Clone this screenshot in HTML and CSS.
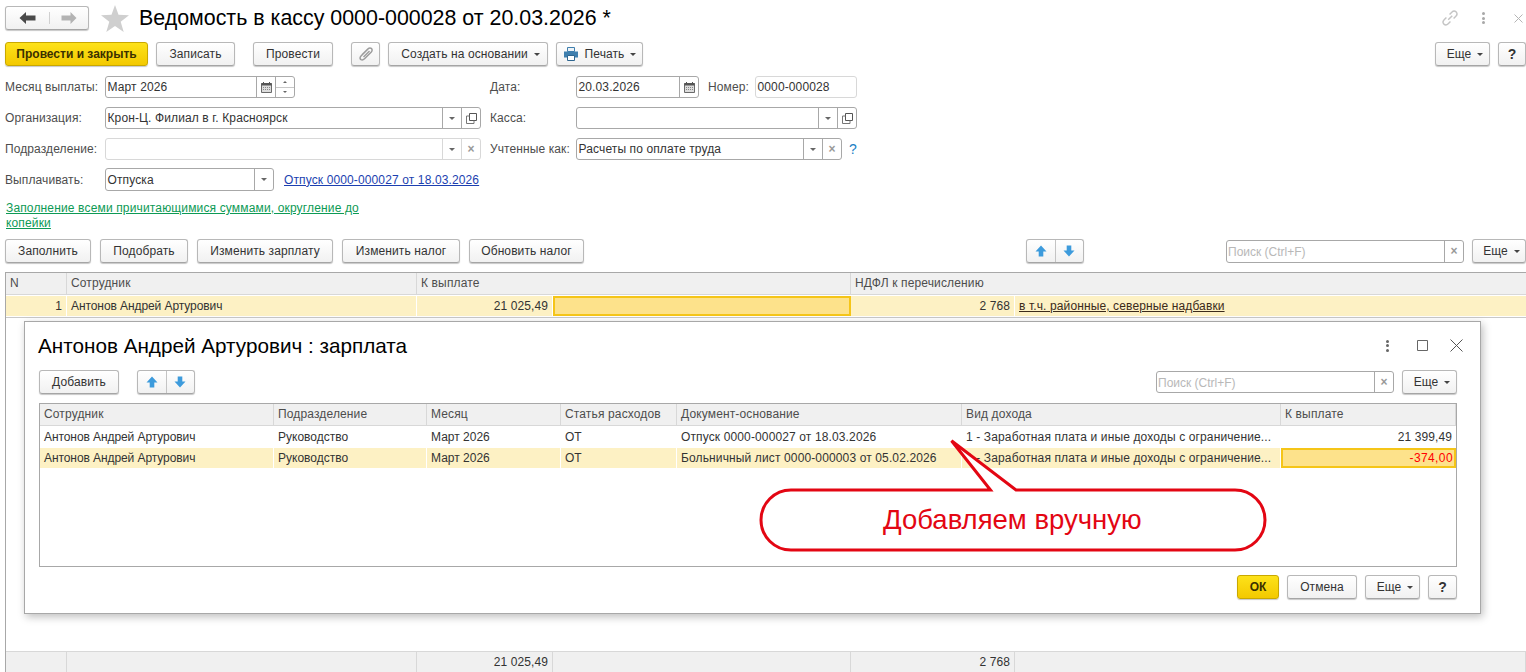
FILE: index.html
```html
<!DOCTYPE html>
<html lang="ru">
<head>
<meta charset="utf-8">
<title>Ведомость в кассу</title>
<link rel="stylesheet" href="styles.css">
</head>
<body>
<svg class="defs" width="0" height="0" aria-hidden="true">
  <symbol id="i-up" viewBox="0 0 12 12"><path d="M6 .5 11.500 6.500H8.300V11.500H3.700V6.500H.5Z" fill="#3d9bdc"/></symbol>
  <symbol id="i-down" viewBox="0 0 12 12"><path d="M6 11.500 11.500 5.500H8.300V.5H3.700V5.500H.5Z" fill="#3d9bdc"/></symbol>
  <symbol id="i-cal" viewBox="0 0 11 11"><path d="M.5 1.500H10.500V10.500H.5Z" fill="#dcdcdc" stroke="#6a6a6a"/><path d="M.5 1H10.500V3.500H.5Z" fill="#555"/><path d="M2.500 0V2M8.500 0V2" stroke="#555"/><path d="M2 5.500H9M2 7.500H9" stroke="#888" stroke-dasharray="1 1"/></symbol>
  <symbol id="i-open" viewBox="0 0 11 11"><path d="M3.500 .5H10.500V7.500H3.500Z" fill="none" stroke="#555"/><path d="M3.500 3H.5V10.500H8V7.500" fill="none" stroke="#777"/></symbol>
</svg>
<div class="page">
  <header class="head">
    <div class="btn nav">
      <span class="nav-cell back"><svg width="17" height="12" viewBox="0 0 17 12"><path d="M7 0 .5 6 7 12V8.500H16.500V3.500H7Z" fill="#4a4a4a"/></svg></span>
      <span class="nav-cell"><svg width="16" height="12" viewBox="0 0 16 12"><path d="M9.500 0 15.500 6 9.500 12V8.500H.5V3.500H9.500Z" fill="#b3b3b3"/></svg></span>
    </div>
    <svg class="star" width="28" height="27" viewBox="0 0 28 27"><path d="M14 0 17.500 9.800 28 10.200 19.700 16.700 22.700 27 14 21 5.300 27 8.300 16.700 0 10.200 10.500 9.800Z" fill="#cfcfcf"/></svg>
    <h1 class="title">Ведомость в кассу 0000-000028 от 20.03.2026 *</h1>
    <div class="win-icons">
      <svg class="chain" width="18" height="18" viewBox="0 0 20 20" fill="none" stroke="#c4c4c4" stroke-width="1.600"><path d="M8 12 12.500 7.500"/><path d="M9.500 6 12 3.500C13.500 2 15.500 2 16.800 3.200 18 4.500 18 6.500 16.500 8L14 10.500"/><path d="M10.500 14 8 16.500C6.500 18 4.500 18 3.200 16.800 2 15.500 2 13.500 3.500 12L6 9.500"/></svg>
      <span class="kebab light"><i></i><i></i><i></i></span>
      <svg class="win-x" width="9" height="9" viewBox="0 0 9 9" stroke="#b5b5b5"><path d="M.5 .5 8.500 8.500M8.500 .5 .5 8.500"/></svg>
    </div>
  </header>

  <div class="bar main-bar">
    <button class="btn primary w143">Провести и закрыть</button>
    <button class="btn w79">Записать</button>
    <button class="btn w80 ml10">Провести</button>
    <button class="btn w29 ml10"><svg width="14" height="14" viewBox="0 0 14 14" fill="none" stroke="#9c9c9c" stroke-width="1.500"><path d="M9.500 1.500 2 9C.5 10.500 1 12 2 12.700 3 13.300 4.300 13 5.500 11.800L12.300 5C13.500 3.700 13.300 2.200 12.300 1.400 11.300.7 10 .9 8.800 2L3 7.800"/><path d="M10.500 4 4.500 10"/></svg></button>
    <button class="btn w160 more">Создать на основании <i class="caret"></i></button>
    <button class="btn w87"><svg class="printer" width="16" height="14" viewBox="0 0 16 14"><path d="M4.500 .5H11.500V4.500H4.500Z" fill="#eef3f7" stroke="#3f7fae"/><path d="M1 4.500H15V10.500H1Z" fill="#3f7fae"/><path d="M4.500 8.500H11.500V13.500H4.500Z" fill="#fff" stroke="#2f6690"/></svg>Печать <i class="caret"></i></button>
    <span class="grow"></span>
    <button class="btn w55 more">Еще <i class="caret"></i></button>
    <button class="btn w28 q">?</button>
  </div>

  <div class="form">
    <div class="row">
      <label class="lbl l1">Месяц выплаты:</label>
      <div class="field w190"><span class="val">Март 2026</span><span class="cell"><svg width="11" height="11"><use href="#i-cal"/></svg></span><span class="cell spin"><span><i class="tri up"></i></span><span><i class="tri"></i></span></span></div>
      <label class="lbl l2 gap195">Дата:</label>
      <div class="field w123"><span class="val">20.03.2026</span><span class="cell"><svg width="11" height="11"><use href="#i-cal"/></svg></span></div>
      <label class="lbl l3">Номер:</label>
      <div class="field soft w102"><span class="val">0000-000028</span></div>
    </div>
    <div class="row">
      <label class="lbl l1">Организация:</label>
      <div class="field w376"><span class="val">Крон-Ц. Филиал в г. Красноярск</span><span class="cell"><i class="tri"></i></span><span class="cell"><svg width="11" height="11"><use href="#i-open"/></svg></span></div>
      <label class="lbl l2 gap9">Касса:</label>
      <div class="field w281"><span class="val"></span><span class="cell"><i class="tri"></i></span><span class="cell"><svg width="11" height="11"><use href="#i-open"/></svg></span></div>
    </div>
    <div class="row">
      <label class="lbl l1">Подразделение:</label>
      <div class="field soft w376"><span class="val"></span><span class="cell"><i class="tri"></i></span><span class="cell"><span class="x">×</span></span></div>
      <label class="lbl l2 gap9">Учтенные как:</label>
      <div class="field w266"><span class="val">Расчеты по оплате труда</span><span class="cell"><i class="tri"></i></span><span class="cell"><span class="x">×</span></span></div>
      <span class="hint">?</span>
    </div>
    <div class="row tall">
      <label class="lbl l1">Выплачивать:</label>
      <div class="field w169"><span class="val">Отпуска</span><span class="cell"><i class="tri"></i></span></div>
      <a class="link blue">Отпуск 0000-000027 от 18.03.2026</a>
    </div>
  </div>

  <a class="link green note">Заполнение всеми причитающимися суммами, округление до копейки</a>

  <div class="bar table-bar">
    <button class="btn w86">Заполнить</button>
    <button class="btn w88">Подобрать</button>
    <button class="btn w136">Изменить зарплату</button>
    <button class="btn w118">Изменить налог</button>
    <button class="btn w115">Обновить налог</button>
    <span class="grow"></span>
    <div class="btn arrows"><span><svg width="12" height="12"><use href="#i-up"/></svg></span><span><svg width="12" height="12"><use href="#i-down"/></svg></span></div>
    <span class="spacer"></span>
    <div class="field search"><span class="val ph">Поиск (Ctrl+F)</span><span class="cell"><span class="x">×</span></span></div>
    <button class="btn w54 more">Еще <i class="caret"></i></button>
  </div>

  <section class="grid outer">
    <div class="gr head-row">
      <div class="c">N</div><div class="c">Сотрудник</div><div class="c span2">К выплате</div><div class="c span2 last">НДФЛ к перечислению</div>
    </div>
    <div class="gr sel">
      <div class="c r">1</div><div class="c name">Антонов Андрей Артурович</div><div class="c r">21 025,49</div><div class="c cur"></div><div class="c r">2 768</div><div class="c last"><a class="link dark">в т.ч. районные, северные надбавки</a></div>
    </div>
    <div class="grow"></div>
    <div class="gr foot">
      <div class="c"></div><div class="c"></div><div class="c r">21 025,49</div><div class="c"></div><div class="c r">2 768</div><div class="c last"></div>
    </div>
  </section>

  <section class="dialog">
    <div class="dlg-head">
      <h2 class="dlg-title">Антонов Андрей Артурович : зарплата</h2>
      <span class="kebab"><i></i><i></i><i></i></span>
      <svg class="dlg-max" width="11" height="11" viewBox="0 0 11 11"><path d="M.5 .5H10.500V10.500H.5Z" fill="none" stroke="#666"/></svg>
      <svg class="dlg-close" width="13" height="13" viewBox="0 0 13 13" stroke="#555"><path d="M.5 .5 12.500 12.500M12.500 .5 .5 12.500"/></svg>
    </div>
    <div class="bar dlg-bar">
      <button class="btn w80">Добавить</button>
      <div class="btn arrows ml10"><span><svg width="12" height="12"><use href="#i-up"/></svg></span><span><svg width="12" height="12"><use href="#i-down"/></svg></span></div>
      <span class="grow"></span>
      <div class="field search"><span class="val ph">Поиск (Ctrl+F)</span><span class="cell"><span class="x">×</span></span></div>
      <button class="btn w55 more">Еще <i class="caret"></i></button>
    </div>
    <div class="grid inner">
      <div class="gr2 head-row">
        <div class="c">Сотрудник</div><div class="c">Подразделение</div><div class="c">Месяц</div><div class="c">Статья расходов</div><div class="c">Документ-основание</div><div class="c">Вид дохода</div><div class="c">К выплате</div>
      </div>
      <div class="gr2 plain">
        <div class="c name">Антонов Андрей Артурович</div><div class="c">Руководство</div><div class="c">Март 2026</div><div class="c">ОТ</div><div class="c wide">Отпуск 0000-000027 от 18.03.2026</div><div class="c wide">1 - Заработная плата и иные доходы с ограничение...</div><div class="c r">21 399,49</div>
      </div>
      <div class="gr2 sel">
        <div class="c name">Антонов Андрей Артурович</div><div class="c">Руководство</div><div class="c">Март 2026</div><div class="c">ОТ</div><div class="c wide">Больничный лист 0000-000003 от 05.02.2026</div><div class="c wide">1 - Заработная плата и иные доходы с ограничение...</div><div class="c r cur neg">-374,00</div>
      </div>
    </div>
    <div class="bar dlg-foot">
      <span class="grow"></span>
      <button class="btn primary w42">ОК</button>
      <button class="btn w70">Отмена</button>
      <button class="btn w55 more">Еще <i class="caret"></i></button>
      <button class="btn w29 q">?</button>
    </div>
  </section>

  <div class="callout">
    <svg class="bubble" width="520" height="118" viewBox="0 0 520 118"><path d="M32 53H231.500L192.500 3.700 257 53H476A30 30 0 0 1 476 113H32A30 30 0 0 1 32 53Z" fill="#fff" stroke="#e30613" stroke-width="3"/></svg>
    <span class="callout-text">Добавляем вручную</span>
  </div>
</div>
</body>
</html>
```
FILE: styles.css
```css
* { box-sizing: border-box; }
html, body { margin: 0; height: 100%; }
body { background: #fff; overflow: hidden; font: 12px "Liberation Sans", Arial, sans-serif; color: #333; }
.defs { position: absolute; }
.page { position: relative; width: 1526px; height: 672px; display: flex; flex-direction: column; overflow: hidden; }
.grow { flex: 1; }

.head { display: flex; align-items: center; height: 28px; margin-top: 4px; padding-left: 5px; }
.nav { display: flex; width: 84px; height: 28px; padding: 0; border-radius: 4px; box-shadow: none; letter-spacing: 0; }
.nav-cell { flex: 1; display: flex; align-items: center; justify-content: center; }
.nav-cell.back { flex: none; width: 43px; }
.nav-cell + .nav-cell { border-left: 1px solid #d0d0d0; }
.star { margin: 0 10px 0 12px; flex: none; }
.title { margin: 0; font-size: 21.400px; font-weight: 400; color: #000; white-space: nowrap; }
.win-icons { margin-left: auto; display: flex; align-items: center; padding-right: 3px; }
.kebab { display: inline-flex; flex-direction: column; gap: 1.500px; }
.kebab i { width: 3px; height: 3px; border-radius: 50%; background: #666; }
.kebab.light i { background: #a8a8a8; }
.kebab.light { margin: 0 29px 0 23px; }

.bar { display: flex; align-items: center; gap: 8px; }
.main-bar { margin-top: 10px; height: 24px; padding-left: 5px; }
.btn { display: inline-flex; align-items: center; justify-content: center; height: 24px; padding: 0; border: 1px solid #b8b8b8; border-bottom-color: #a5a5a5; border-radius: 3px; background: linear-gradient(#fff, #f1f1f1); box-shadow: 0 1px 1px #c8c8c8; font: inherit; letter-spacing: .1px; color: #333; white-space: nowrap; flex: none; }
.more { padding-left: 5px; }
.primary { background: linear-gradient(#fde21a, #f3c900); border-color: #c9a800; color: #3a3000; font-weight: 700; letter-spacing: 0; }
.q { font-weight: 700; font-size: 14px; }
.caret { display: inline-block; margin-left: 6px; border: 3px solid transparent; border-top: 3px solid #444; border-bottom: 0; vertical-align: middle; }
.printer { margin-right: 6px; }
.ml10 { margin-left: 10px; }
.w28 { width: 28px; } .w29 { width: 29px; } .w42 { width: 42px; } .w54 { width: 54px; } .w55 { width: 55px; } .w70 { width: 70px; } .w79 { width: 79px; } .w80 { width: 80px; } .w86 { width: 86px; } .w87 { width: 87px; } .w88 { width: 88px; } .w115 { width: 115px; } .w118 { width: 118px; } .w136 { width: 136px; } .w143 { width: 143px; } .w160 { width: 160px; }

.form { display: flex; flex-direction: column; gap: 9px; margin-top: 10px; padding-left: 5px; }
.row { display: flex; align-items: center; height: 22px; }
.row.tall { height: 23px; margin-top: -1px; }
.row.tall .field { height: 23px; }
.row.tall .val { line-height: 22px; }
.lbl { color: #4d4d4d; flex: none; white-space: nowrap; letter-spacing: .1px; }
.l1 { width: 100px; }
.l2 { width: 86px; }
.l3 { width: 47px; margin-left: 9px; }
.gap195 { margin-left: 195px; }
.gap9 { margin-left: 9px; }
.field { display: flex; align-items: stretch; height: 22px; border: 1px solid #a8a8a8; border-radius: 3px; background: #fff; flex: none; }
.field.soft { border-color: #d8d8d8; }
.val { flex: 1; padding-left: 1.500px; line-height: 20px; letter-spacing: .12px; color: #333; white-space: nowrap; overflow: hidden; }
.ph { color: #b8b8b8; padding-left: 1px; letter-spacing: 0; line-height: 22px; }
.cell { width: 19px; border-left: 1px solid #a8a8a8; display: flex; align-items: center; justify-content: center; flex: none; }
.field.soft .cell { border-left-color: #d8d8d8; }
.spin { flex-direction: column; align-items: stretch; }
.spin span { flex: 1; display: flex; align-items: center; justify-content: center; }
.spin span + span { border-top: 1px solid #c8c8c8; }
.tri { display: block; width: 0; height: 0; border: 3px solid transparent; border-top: 3px solid #666; border-bottom: 0; }
.tri.up { border-top: 0; border-bottom: 3px solid #666; }
.spin .tri { border-width: 2px; border-top-width: 2px; border-bottom-width: 0; }
.spin .tri.up { border-top-width: 0; border-bottom-width: 2px; }
.x { color: #999; font-weight: 700; font-size: 12px; line-height: 1; }
.w102 { width: 102px; } .w123 { width: 123px; } .w169 { width: 169px; } .w190 { width: 190px; } .w266 { width: 266px; } .w281 { width: 281px; } .w376 { width: 376px; }
.hint { margin-left: 7px; color: #1c7fc4; font-size: 14px; }

.link { text-decoration: underline; }
.blue { color: #1c3fb0; margin-left: 10px; letter-spacing: .125px; }
.green { color: #0d9a55; letter-spacing: .15px; }
.dark { color: #3b2a1a; letter-spacing: .12px; }
.note { display: block; width: 360px; margin: 10px 0 0 6px; line-height: 15px; }

.table-bar { margin-top: 8px; height: 24px; padding-left: 5px; gap: 9px; }
.arrows { display: flex; width: 58px; }
.arrows span { flex: 1; display: flex; align-items: center; justify-content: center; height: 100%; }
.arrows span + span { border-left: 1px solid #c4c4c4; }
.spacer { width: 124px; flex: none; }
.search { width: 238px; }
.table-bar .search { margin-right: -1px; height: 23px; }

.grid { display: flex; flex-direction: column; border: 1px solid #a8a8a8; }
.outer { margin: 9px 0 0 5px; flex: 1; border-right: 0; border-bottom: 0; min-height: 0; }
.gr { display: grid; grid-template-columns: 61px 350px 136px 298px 164px 1fr; }
.gr2 { display: grid; grid-template-columns: 234px 153px 134px 116px 285px 319px 1fr; }
.c { padding: 0 4px; line-height: 20px; white-space: nowrap; overflow: hidden; border-right: 1px solid #fff; color: #333; }
.name { letter-spacing: -.08px; }
.wide { letter-spacing: .13px; }
.head-row { background: #f0f0f0; height: 22px; border-bottom: 1px solid #d8d8d8; margin-bottom: 1px; }
.head-row .c { line-height: 21px; color: #4d4d4d; border-right: 1px solid #d8d8d8; letter-spacing: .14px; }
.head-row .last { border-right: 0; }
.span2 { grid-column: span 2; }
.sel { background: #fdf1c4; height: 20px; margin-bottom: 1px; }
.plain { height: 20px; margin-bottom: 1px; }
.plain .r { padding-right: 3px; }
.r { text-align: right; letter-spacing: .1px; }
.cur { background: #fde28b; border: 2px solid #f5c518; line-height: 16px; }
.neg { color: #f00; padding-right: 1px; letter-spacing: .4px; }
.foot { height: 21px; background: #f0f0f0; border-top: 1px solid #d8d8d8; }
.foot .c { border-right: 1px solid #d8d8d8; }
.last { border-right: 0; }
.outer .sel { border-bottom: 1px solid #fff; height: 21px; box-shadow: 0 1px 0 #c8c8c8; }
.outer .sel .c { line-height: 21px; }

.dialog { position: absolute; left: 24px; top: 321px; width: 1457px; height: 293px; background: #fff; border: 1px solid #a8a8a8; box-shadow: 2px 3px 8px rgba(0,0,0,.25); padding: 0 23px 0 14px; display: flex; flex-direction: column; }
.dlg-head { display: flex; align-items: center; height: 47px; }
.dlg-title { margin: 0 auto 0 -1px; font-size: 20.700px; font-weight: 400; color: #000; }
.dlg-max { margin-left: 28px; }
.dlg-close { margin-left: 22px; margin-right: -6px; }
.dlg-bar { height: 24px; margin-top: 1px; gap: 8px; }
.inner { margin-top: 9px; height: 164px; }
.dlg-foot { margin-top: 8px; }

.callout { position: absolute; left: 759px; top: 437px; width: 520px; height: 118px; }
.bubble { display: block; }
.callout-text { position: absolute; left: 124px; top: 67px; font-size: 27.500px; line-height: 32px; color: #e30613; white-space: nowrap; }
```
